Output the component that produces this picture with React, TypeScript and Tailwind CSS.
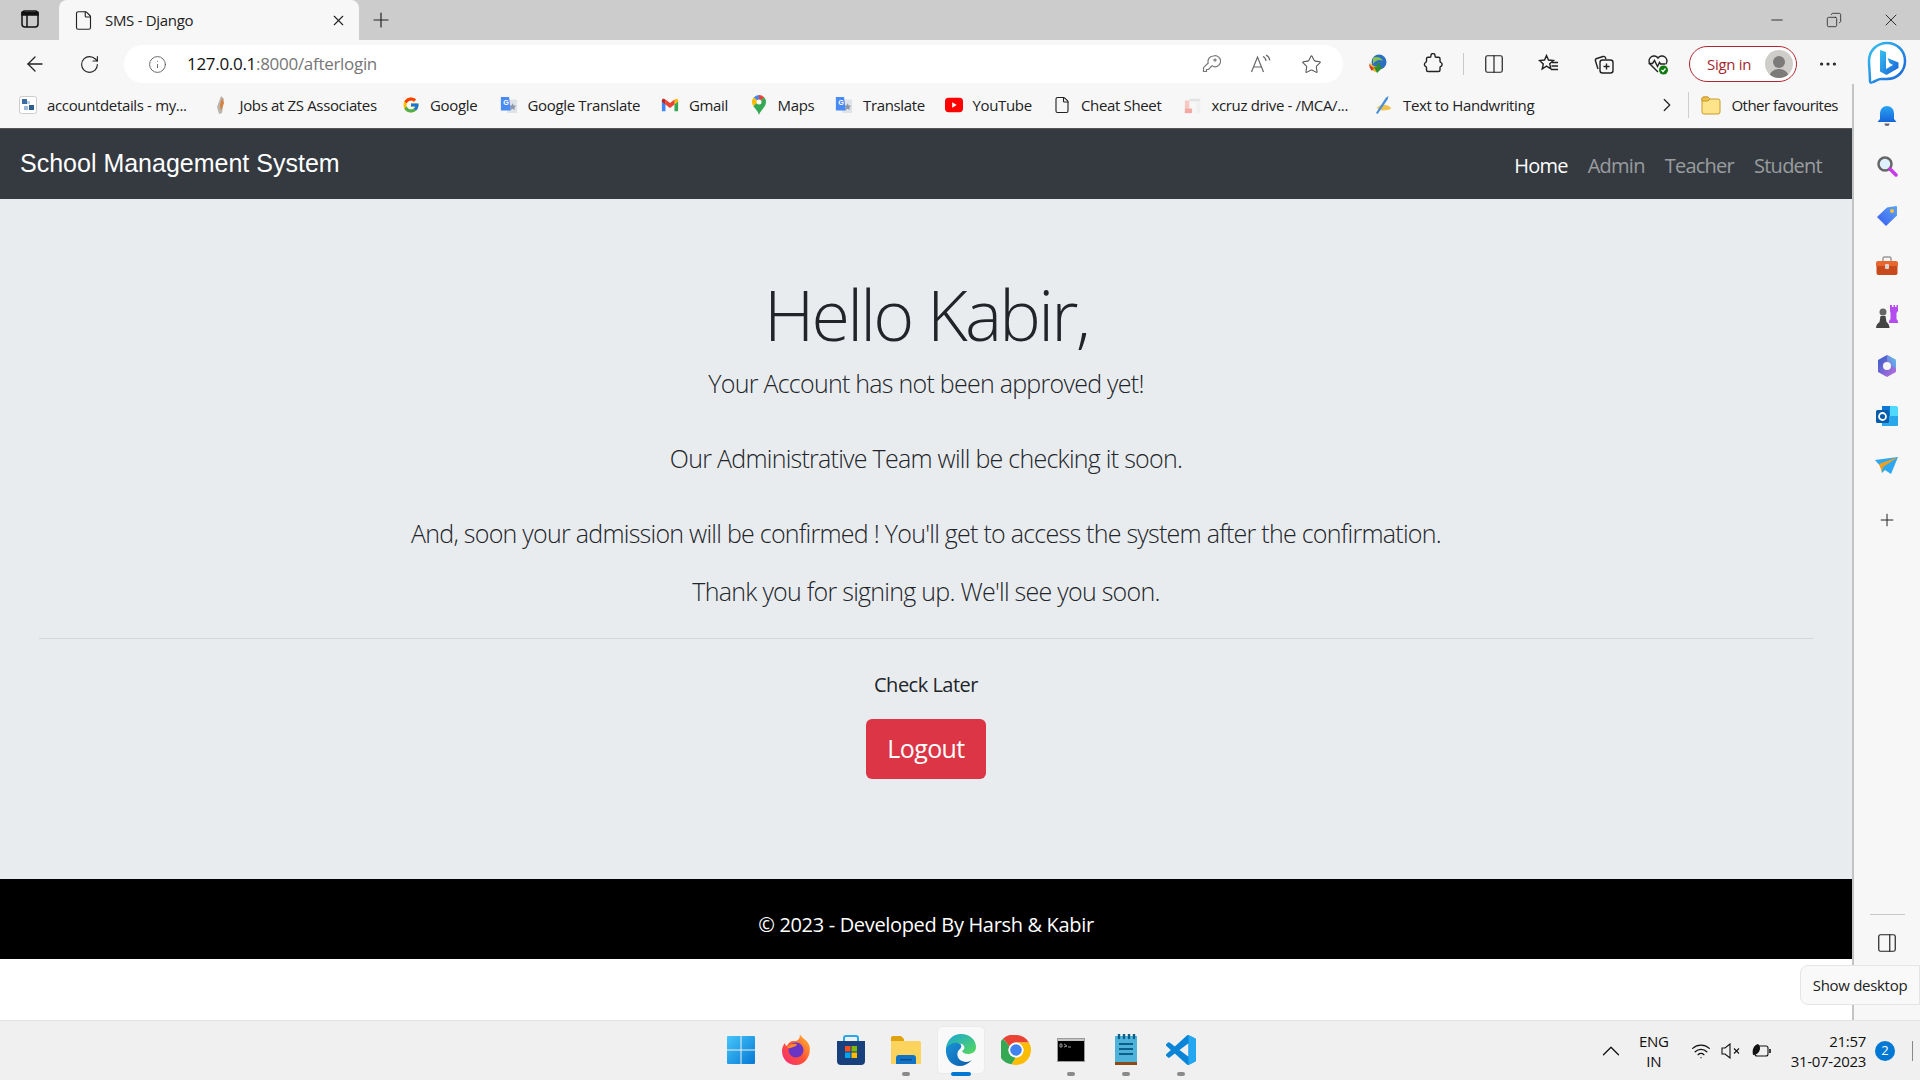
import {
  ArrowLeft,
  ChevronRight,
  ChevronUp,
  Columns2,
  Copy,
  File,
  Info,
  Minus,
  MoreHorizontal,
  PanelRight,
  Plus,
  RotateCw,
  Star,
  Wifi,
  X,
} from "lucide-react";
import { FcGoogle } from "react-icons/fc";
import type { ReactNode } from "react";

const ui = "font-['Open_Sans','Noto_Sans',sans-serif]";

function AccountIcon() {
  return (
    <svg width="18" height="18" viewBox="0 0 18 18">
      <rect x="0.5" y="0.5" width="17" height="17" rx="2" fill="#fff" stroke="#ccc" />
      <rect x="3" y="3" width="5" height="5" fill="#3b6ea5" />
      <rect x="8" y="5" width="3" height="3" fill="#b9cfe4" />
      <rect x="10" y="9" width="5" height="5" fill="#2b5d91" />
      <rect x="5" y="10" width="4" height="4" fill="#9dbad6" />
    </svg>
  );
}

function JobsIcon() {
  return (
    <svg width="18" height="20" viewBox="0 0 18 20">
      <path d="M9 1 L12 4 L10 18 L7 19 L5 12 Z" fill="#b9b5ae" />
      <path d="M10 3 L12 8 L9 16 L8 10 Z" fill="#d9803a" />
    </svg>
  );
}

function TranslateIcon() {
  return (
    <svg width="20" height="20" viewBox="0 0 20 20">
      <path d="M8 4h10a1 1 0 0 1 1 1v14H8z" fill="#dfe3e8" />
      <path d="M14 8l1.2 2.6 2.8.3-2 1.9.5 2.7-2.5-1.4-2.5 1.4.5-2.7-2-1.9 2.8-.3z" fill="#8b97a6" />
      <path d="M1 1h9l2 15H1z" fill="#4a8af4" />
      <text x="3.5" y="10.5" fontSize="8" fontWeight="700" fill="#fff" fontFamily="Liberation Sans, sans-serif">G</text>
    </svg>
  );
}

function GmailIcon() {
  return (
    <svg width="20" height="16" viewBox="0 0 20 16">
      <path d="M1 3v11a1 1 0 0 0 1 1h3V7z" fill="#4285f4" />
      <path d="M19 3v11a1 1 0 0 1-1 1h-3V7z" fill="#34a853" />
      <path d="M15 2v5.5l4-3V3c0-2-2-2.400-3-1.500z" fill="#fbbc04" />
      <path d="M5 7.500V2l5 3.800L15 2v5.500l-5 3.800z" fill="#ea4335" />
      <path d="M1 3c0-2 2-2.400 3-1.500L5 2v5.500l-4-3z" fill="#c5221f" />
    </svg>
  );
}

function MapsIcon() {
  return (
    <svg width="16" height="20" viewBox="0 0 16 20">
      <path d="M8 0a7 7 0 0 0-5.300 2.500L8 7z" fill="#4285f4" />
      <path d="M8 0v7l5.300-4.500A7 7 0 0 0 8 0z" fill="#ea4335" />
      <path d="M2.700 2.500A7 7 0 0 0 1 7c0 1.500.6 2.900 1.300 4L8 7z" fill="#fbbc04" />
      <path d="M13.300 2.500 2.300 11c1.700 2.600 4.700 5 5.700 9 1-4 6.900-8 7-13a7 7 0 0 0-1.700-4.500z" fill="#34a853" />
      <circle cx="8" cy="7" r="2.500" fill="#fff" />
    </svg>
  );
}

function YoutubeIcon() {
  return (
    <svg width="20" height="16" viewBox="0 0 20 16">
      <rect width="20" height="16" y="0" rx="4" fill="#f00" />
      <path d="M8 5l5 3-5 3z" fill="#fff" />
    </svg>
  );
}

function DriveIcon() {
  return (
    <svg width="20" height="20" viewBox="0 0 20 20">
      <path d="M1 5h5v14H1z" fill="#f7c9c4" />
      <path d="M6 3h12v3H6z" fill="#e3e3e3" />
      <path d="M14 6h4v13h-4z" fill="#f0f0f0" />
      <path d="M1 14h8v5H1z" fill="#f3a9a1" />
    </svg>
  );
}

function HandwritingIcon() {
  return (
    <svg width="20" height="22" viewBox="0 0 20 22">
      <path d="M2 14c3-3 7-4 10-3 3 .5 5 2 6 4-3 2-6 2-9 2-3 .3-5-1-7-3z" fill="#f2c24f" />
      <path d="M1 20 12 3l3-2-1 4L3 21z" fill="#4a90d9" />
    </svg>
  );
}

function FolderIcon() {
  return (
    <svg width="20" height="20" viewBox="0 0 20 20">
      <path d="M1 4a2 2 0 0 1 2-2h4l2 2h8a2 2 0 0 1 2 2v11a2 2 0 0 1-2 2H3a2 2 0 0 1-2-2z" fill="#fde48a" stroke="#c99a2e" />
      <path d="M1 5a2 2 0 0 1 2-3h4l2 2-2 2H1z" fill="#eec04b" stroke="#c99a2e" />
    </svg>
  );
}

const bookmarks: { label: string; icon: ReactNode; cls: string }[] = [
  { label: "accountdetails - my...", icon: <AccountIcon />, cls: "w-[142px]" },
  { label: "Jobs at ZS Associates", icon: <JobsIcon />, cls: "w-[140px]" },
  { label: "Google", icon: <FcGoogle size={18} />, cls: "w-[47px]" },
  { label: "Google Translate", icon: <TranslateIcon />, cls: "w-[111px]" },
  { label: "Gmail", icon: <GmailIcon />, cls: "w-[38px]" },
  { label: "Maps", icon: <MapsIcon />, cls: "w-[35px]" },
  { label: "Translate", icon: <TranslateIcon />, cls: "w-[59px]" },
  { label: "YouTube", icon: <YoutubeIcon />, cls: "w-[58px]" },
  { label: "Cheat Sheet", icon: <File size={22} strokeWidth={1.5} color="#222" />, cls: "w-[80px]" },
  { label: "xcruz drive - /MCA/...", icon: <DriveIcon />, cls: "w-[141px]" },
  { label: "Text to Handwriting", icon: <HandwritingIcon />, cls: "w-[130px]" },
];

function KeyIcon() {
  return (
    <svg width="20" height="20" viewBox="0 0 20 20" fill="none" stroke="#777" strokeWidth="1.2">
      <path d="M12.500 2a5.500 5.500 0 0 0-5.300 7L2.500 13.700V17.500H5.500V15.500H7.500L11 11.800A5.500 5.500 0 1 0 12.500 2z" />
      <circle cx="14" cy="6" r="1" />
    </svg>
  );
}

function ReadAloudIcon() {
  return (
    <svg width="22" height="20" viewBox="0 0 22 20" fill="none" stroke="#666" strokeWidth="1.2">
      <path d="M1.500 18 7.500 3l6 15M3.500 13h8" />
      <path d="M13 2.500c1.800.8 2.800 2.300 3 4.500M16 1c2.200 1 3.500 3 3.800 5.500" />
    </svg>
  );
}

function IdmIcon() {
  return (
    <svg width="20" height="20" viewBox="0 0 20 20">
      <circle cx="11" cy="8" r="7.500" fill="#2b6fc4" />
      <path d="M5 4c3-2 8-1 10 3-4-2-7-1-10 3z" fill="#8ac44a" />
      <path d="M2 9c0 4 2 8 6 9 2-1 3-3 4-5-4 0-7-1-10-4z" fill="#e2b31f" />
      <path d="M9 19l6-6h-3V9H9v4H6z" fill="#2f8c2f" />
      <path d="M1 9c1 3 3 4 5 5l-2 3C2 15 1 12 1 9z" fill="#d23a2a" />
    </svg>
  );
}

function PuzzleIcon() {
  return (
    <svg width="20" height="22" viewBox="0 0 20 22" fill="none" stroke="#222" strokeWidth="1.4">
      <path d="M8 2.500a2 2 0 0 1 4 0c0 1 .2 1.800 1 1.800h2.500a1.500 1.500 0 0 1 1.500 1.500v2.500c0 .8.800 1 1 1.200a2.200 2.200 0 0 1 0 3.800c-.5.300-1 .5-1 1.200v2.500a1.500 1.500 0 0 1-1.500 1.500H5a1.500 1.500 0 0 1-1.500-1.500V14.500c0-.7-.5-1-1-1.200a2.200 2.200 0 0 1 0-3.800c.5-.3 1-.5 1-1.200V5.800A1.500 1.500 0 0 1 5 4.300h2c.6 0 1-.8 1-1.800z" />
    </svg>
  );
}

function FavoritesIcon() {
  return (
    <svg width="22" height="22" viewBox="0 0 22 22" fill="none" stroke="#222" strokeWidth="1.4">
      <path d="M8.500 2.500l2 4.500 5 .5-3.800 3.300 1.100 5-4.300-2.600L4.200 16l1.100-5L1.500 7.500l5-.5z" />
      <path d="M14 9.500h6M13.500 13h6.500M13 16.500h7" />
    </svg>
  );
}

function CollectionsIcon() {
  return (
    <svg width="22" height="22" viewBox="0 0 22 22" fill="none" stroke="#222" strokeWidth="1.4">
      <path d="M5 16 2.500 8a2 2 0 0 1 1.300-2.500L10 3.500a2 2 0 0 1 2.500 1.200L13 6" />
      <rect x="7" y="7" width="13" height="13" rx="2.500" />
      <path d="M13.500 10.500v6M10.500 13.500h6" />
    </svg>
  );
}

function HealthIcon() {
  return (
    <svg width="22" height="22" viewBox="0 0 22 22" fill="none">
      <path d="M11 19 3 11a5 5 0 0 1 8-6 5 5 0 0 1 8 6" stroke="#222" strokeWidth="1.4" />
      <path d="M1.500 10.500h4l2-3 3 6 2-4 1 1.500h5" stroke="#222" strokeWidth="1.4" />
      <circle cx="16.500" cy="17" r="4.500" fill="#107c10" />
      <path d="M14.500 17l1.500 1.500 2.500-3" stroke="#fff" strokeWidth="1.2" />
    </svg>
  );
}

function BingIcon() {
  return (
    <svg width="40" height="46" viewBox="0 0 40 46">
      <defs>
        <linearGradient id="bingStroke" x1="0" y1="0" x2="1" y2="1">
          <stop offset="0" stopColor="#35c1f1" />
          <stop offset="1" stopColor="#1b5fd6" />
        </linearGradient>
      </defs>
      <path d="M20 2C9.500 2 2 10 2 20c0 6 1 13 1 20 0 2 1 2 3 1 3-1 5-3 8-3h6c10.500 0 18-8 18-18S30.500 2 20 2z" fill="#fff" stroke="url(#bingStroke)" strokeWidth="2.500" />
      <path d="M13 9l6 2v17l7-4-3.500-2-2-5 11 4.500v5.500l-12 7-6.500-3.500z" fill="url(#bingStroke)" />
    </svg>
  );
}

function BellIcon() {
  return (
    <svg width="20" height="22" viewBox="0 0 20 22">
      <defs>
        <linearGradient id="bell" x1="0" y1="0" x2="0" y2="1">
          <stop offset="0" stopColor="#2aa4f4" />
          <stop offset="1" stopColor="#1565d8" />
        </linearGradient>
      </defs>
      <path d="M10 1a7 7 0 0 0-7 7v6l-2.500 3h19L17 14V8a7 7 0 0 0-7-7z" fill="url(#bell)" />
      <path d="M7.500 18.500h5a2.500 2.500 0 0 1-5 0z" fill="#667" />
    </svg>
  );
}

function SearchColorIcon() {
  return (
    <svg width="22" height="22" viewBox="0 0 22 22">
      <circle cx="9" cy="9" r="6.500" fill="#dff1fb" stroke="#666" strokeWidth="2.500" />
      <path d="M14 14l6 6" stroke="#c73ae8" strokeWidth="3.500" strokeLinecap="round" />
    </svg>
  );
}

function TagIcon() {
  return (
    <svg width="22" height="22" viewBox="0 0 22 22">
      <defs>
        <linearGradient id="tag" x1="0" y1="1" x2="1" y2="0">
          <stop offset="0" stopColor="#3b5bf0" />
          <stop offset="1" stopColor="#5aa5f5" />
        </linearGradient>
      </defs>
      <path d="M11 2.500 20 1a1 1 0 0 1 1 1v8.500L10 21 1 12z" fill="url(#tag)" />
      <circle cx="16" cy="6" r="2" fill="#fbc02d" />
    </svg>
  );
}

function ToolboxIcon() {
  return (
    <svg width="24" height="20" viewBox="0 0 24 20">
      <path d="M8 5V2.500A1.500 1.500 0 0 1 9.500 1h5A1.500 1.500 0 0 1 16 2.500V5" fill="none" stroke="#9a9a9a" strokeWidth="1.500" />
      <path d="M1 7a2 2 0 0 1 2-2h18a2 2 0 0 1 2 2v3H1z" fill="#e9662c" />
      <path d="M1.500 10h21v7.500A2 2 0 0 1 20.500 19h-17a2 2 0 0 1-2-2z" fill="#c8491b" />
      <rect x="10" y="8" width="4" height="5" rx="1" fill="#d9d4cf" />
    </svg>
  );
}

function ChessIcon() {
  return (
    <svg width="24" height="24" viewBox="0 0 24 24">
      <path d="M15 1h2v2h1.500V1h1.500v2h1.500V1H23v6l-1.500 2v6l1.500 2v2H14v-2l1.500-2V9L15 7z" fill="#b44cf0" />
      <circle cx="8" cy="8" r="3.500" fill="#666" />
      <path d="M5.500 12h5l1 6h-7zM1 24c0-3 2-5 3.500-6h7c1.500 1 3 3 3 6z" fill="#444" />
    </svg>
  );
}

function OfficeIcon() {
  return (
    <svg width="22" height="24" viewBox="0 0 22 24">
      <defs>
        <linearGradient id="off1" x1="0" y1="0" x2="1" y2="1">
          <stop offset="0" stopColor="#2f5fc8" />
          <stop offset="1" stopColor="#c06fe0" />
        </linearGradient>
        <linearGradient id="off2" x1="0" y1="1" x2="1" y2="0">
          <stop offset="0" stopColor="#8f60d8" />
          <stop offset="1" stopColor="#4fd2f2" />
        </linearGradient>
      </defs>
      <path d="M11 1l9 5v12l-9 5-9-5V6z" fill="url(#off1)" />
      <path d="M11 1l9 5v9l-5-3c0-2-1-4-4-4z" fill="url(#off2)" />
      <circle cx="11" cy="12" r="4" fill="#f7f7f7" />
    </svg>
  );
}

function OutlookIcon() {
  return (
    <svg width="22" height="22" viewBox="0 0 22 22">
      <rect x="6" y="1" width="14" height="12" fill="#0f78d4" />
      <path d="M6 11h16v9a1 1 0 0 1-1 1H6z" fill="#28a8ea" />
      <path d="M14 1h6a2 2 0 0 1 2 2v8h-8z" fill="#50d9ff" />
      <rect x="0" y="5" width="13" height="13" rx="1.500" fill="#0a5cab" />
      <circle cx="6.500" cy="11.500" r="3.500" fill="none" stroke="#fff" strokeWidth="1.800" />
    </svg>
  );
}

function SendIcon() {
  return (
    <svg width="24" height="18" viewBox="0 0 24 18">
      <path d="M0 3 23 0 16 17l-6-4-3 3-1-6z" fill="#2da7f0" />
      <path d="M4 7 23 0 8 10l-1 5z" fill="#f0a020" />
    </svg>
  );
}

function WinIcon() {
  return (
    <svg width="30" height="30" viewBox="0 0 30 30">
      <defs>
        <linearGradient id="win" x1="0" y1="0" x2="1" y2="1">
          <stop offset="0" stopColor="#46c6fa" />
          <stop offset="1" stopColor="#0678d4" />
        </linearGradient>
      </defs>
      <path d="M1 2a1 1 0 0 1 1-1h12.500v13.500H1zM15.500 1H28a1 1 0 0 1 1 1v12.500H15.500zM1 15.500h13.500V29H2a1 1 0 0 1-1-1zM15.500 15.500H29V28a1 1 0 0 1-1 1H15.500z" fill="url(#win)" />
    </svg>
  );
}

function FirefoxIcon() {
  return (
    <svg width="30" height="32" viewBox="0 0 30 32">
      <defs>
        <linearGradient id="ff" x1="1" y1="0" x2="0" y2="1">
          <stop offset="0" stopColor="#ffc22e" />
          <stop offset="0.5" stopColor="#ff5634" />
          <stop offset="1" stopColor="#f4267a" />
        </linearGradient>
      </defs>
      <path d="M19 0c1 4 8 6 9.500 12 2 9-4 19-13.500 19C6 31 1 24 1 17c0-3 1-6 3-8 0 2 1 3 2 3 1-3 4-5 6-5 3 0 7 0 7-7z" fill="url(#ff)" />
      <circle cx="15" cy="16" r="7.500" fill="#6a35c4" />
      <path d="M6 13c3-3 7-4 9-3 3 .5-2 3-3 3-2 1-4 2-6 0z" fill="#ff8a2e" />
    </svg>
  );
}

function StoreIcon() {
  return (
    <svg width="30" height="30" viewBox="0 0 30 30">
      <path d="M8 6V3a2 2 0 0 1 2-2h10a2 2 0 0 1 2 2v3" fill="none" stroke="#28a8ea" strokeWidth="2" />
      <path d="M1 6h28v20a4 4 0 0 1-4 4H5a4 4 0 0 1-4-4z" fill="#17407c" />
      <rect x="9" y="11" width="5.500" height="5.500" fill="#f25022" />
      <rect x="15.500" y="11" width="5.500" height="5.500" fill="#7fba00" />
      <rect x="9" y="17.500" width="5.500" height="5.500" fill="#00a4ef" />
      <rect x="15.500" y="17.500" width="5.500" height="5.500" fill="#ffb900" />
    </svg>
  );
}

function ExplorerIcon() {
  return (
    <svg width="30" height="28" viewBox="0 0 30 28">
      <path d="M0 2a2 2 0 0 1 2-2h8l3 3v5H0z" fill="#e0a30f" />
      <path d="M0 5h28a2 2 0 0 1 2 2v21H0z" fill="#fcd35c" />
      <path d="M5 22a3 3 0 0 1 3-3h14a3 3 0 0 1 3 3v6H5z" fill="#1173c6" />
      <rect x="9" y="23" width="12" height="1.500" fill="#0b4f8f" />
    </svg>
  );
}

function EdgeIcon() {
  return (
    <svg width="32" height="32" viewBox="0 0 32 32">
      <defs>
        <linearGradient id="edgeA" x1="0" y1="0" x2="1" y2="1">
          <stop offset="0" stopColor="#1aa6d8" />
          <stop offset="1" stopColor="#58d858" />
        </linearGradient>
        <linearGradient id="edgeB" x1="0" y1="0" x2="1" y2="1">
          <stop offset="0" stopColor="#1b93d8" />
          <stop offset="1" stopColor="#0b5cab" />
        </linearGradient>
      </defs>
      <path d="M1 14C2 6 8 0 16 0c9 0 15 6 15 13 0 5-4 7-8 7-3 0-5-1-6-3 2-1 3-3 2-5-2-3-7-3-11-1-3 1-6 3-7 3z" fill="url(#edgeA)" />
      <path d="M1 14c3-4 8-6 12-5 4 1 4 4 2 6-3 2-4 7 0 11 3 2 8 3 12 0-4 4-8 6-12 6C6 32 0 24 1 14z" fill="url(#edgeB)" />
    </svg>
  );
}

function ChromeIcon() {
  return (
    <svg width="30" height="30" viewBox="0 0 30 30">
      <path d="M15 0a15 15 0 0 1 13 7.500H15a7.500 7.500 0 0 0-6.500 3.750L2 3.700A15 15 0 0 1 15 0z" fill="#ea4335" />
      <path d="M2 3.700l6.500 7.550A7.500 7.500 0 0 0 15 22.500L10.500 29.300A15 15 0 0 1 2 3.700z" fill="#34a853" />
      <path d="M28 7.500A15 15 0 0 1 10.500 29.300L15 22.500A7.500 7.500 0 0 0 21.500 11.250L15 7.500z" fill="#fbbc04" />
      <circle cx="15" cy="15" r="7.500" fill="#fff" />
      <circle cx="15" cy="15" r="5.800" fill="#3f82f0" />
    </svg>
  );
}

function CmdIcon() {
  return (
    <svg width="28" height="24" viewBox="0 0 28 24">
      <rect x="0.500" y="0.500" width="27" height="23" fill="#000" stroke="#9b9b9b" />
      <rect x="1" y="1" width="26" height="2" fill="#c4c4c4" />
      <path d="M3 6h2v3H3zM7 6l3 2-3 1M11 9h3" stroke="#bbb" strokeWidth="0.800" fill="none" />
    </svg>
  );
}

function NotepadIcon() {
  return (
    <svg width="24" height="32" viewBox="0 0 24 32">
      <rect x="1" y="2" width="22" height="28" fill="#4fb3d9" />
      <rect x="1" y="28" width="22" height="3" fill="#8a4a1a" />
      <path d="M5 0v4M10 0v4M15 0v4M20 0v4" stroke="#0b5f8a" strokeWidth="2.400" strokeLinecap="round" />
      <path d="M5 10h14M5 15h14M5 20h14" stroke="#0b5f8a" strokeWidth="2" />
    </svg>
  );
}

function VscodeIcon() {
  return (
    <svg width="30" height="30" viewBox="0 0 24 24">
      <path
        d="M23.150 2.587 18.210.21a1.494 1.494 0 0 0-1.705.29l-9.460 8.630-4.120-3.128a.999.999 0 0 0-1.276.057L.327 7.261A1 1 0 0 0 .326 8.740L3.899 12 .326 15.260a1 1 0 0 0 .001 1.479L1.650 17.940a.999.999 0 0 0 1.276.057l4.120-3.128 9.460 8.630a1.492 1.492 0 0 0 1.704.29l4.942-2.377A1.500 1.500 0 0 0 24 20.060V3.939a1.500 1.500 0 0 0-.850-1.352zm-5.146 14.861L10.826 12l7.178-5.448v10.896z"
        fill="#0a84d6"
      />
      <path d="M18 0.100 23.150 2.587A1.500 1.500 0 0 1 24 3.939V20.060a1.500 1.500 0 0 1-.850 1.352L18 23.900V17.448V6.552z" fill="#22a7f0" />
    </svg>
  );
}

function MuteIcon() {
  return (
    <svg width="19" height="16" viewBox="0 0 19 16" fill="none" stroke="#111" strokeWidth="1.100">
      <path d="M1 5h3l5-4v14l-5-4H1z" />
      <path d="M13 5.500l5 5M18 5.500l-5 5" />
    </svg>
  );
}

function BatteryIcon() {
  return (
    <svg width="20" height="16" viewBox="0 0 20 16" fill="none" stroke="#111" strokeWidth="1.100">
      <rect x="4" y="3" width="13" height="10" rx="2" />
      <path d="M19 6v4" strokeWidth="1.600" />
      <path d="M7 1c-5 2-6 6-5 11 4 0 7-3 7-7 0-2-1-3-2-4z" fill="#111" stroke="none" />
    </svg>
  );
}

const sideIcons = [
  <BellIcon key="bell" />,
  <SearchColorIcon key="search" />,
  <TagIcon key="tag" />,
  <ToolboxIcon key="tools" />,
  <ChessIcon key="chess" />,
  <OfficeIcon key="office" />,
  <OutlookIcon key="outlook" />,
  <SendIcon key="send" />,
];

const taskbarIcons = [
  { icon: <WinIcon />, key: "win", dot: false },
  { icon: <FirefoxIcon />, key: "firefox", dot: false },
  { icon: <StoreIcon />, key: "store", dot: false },
  { icon: <ExplorerIcon />, key: "explorer", dot: true },
  { icon: <EdgeIcon />, key: "edge", dot: false, active: true },
  { icon: <ChromeIcon />, key: "chrome", dot: false },
  { icon: <CmdIcon />, key: "cmd", dot: true },
  { icon: <NotepadIcon />, key: "notepad", dot: true },
  { icon: <VscodeIcon />, key: "vscode", dot: true },
];

export default function App() {
  return (
    <div className={`relative flex h-[1080px] w-[1920px] flex-col overflow-hidden bg-white ${ui}`}>
      {/* Tab strip */}
      <div className="flex h-10 items-end bg-[#cccccc]">
        <div className="flex h-10 w-[59px] items-center justify-center pb-0.5">
          <svg width="20" height="20" viewBox="0 0 20 20" fill="none" stroke="#111" strokeWidth="1.500">
            <rect x="2" y="2" width="16" height="16" rx="3" />
            <path d="M2 3.500h16V6H2z" fill="#111" />
            <path d="M7 6v12" />
          </svg>
        </div>
        <div className="flex h-10 w-[300px] items-center rounded-t-lg bg-[#f7f7f7] pl-[14px] pr-[12px]">
          <File size={21} strokeWidth={1.3} color="#222" />
          <span className="ml-[11px] flex-1 text-[15px] tracking-[-0.3px] text-[#222]">SMS - Django</span>
          <X size={17} strokeWidth={1.6} color="#222" />
        </div>
        <div className="flex h-10 w-[44px] items-center justify-center">
          <Plus size={24} strokeWidth={1.2} color="#222" />
        </div>
        <div className="flex h-10 flex-1 items-center justify-end pr-[19px] text-[#222]">
          <Minus size={18} strokeWidth={1.2} />
          <Copy size={16} strokeWidth={1.2} className="ml-[40px] -scale-x-100" />
          <X size={20} strokeWidth={1.1} className="ml-[39px]" />
        </div>
      </div>

      {/* Address row */}
      <div className="flex h-11 items-center bg-[#f7f7f7] pt-[4px]">
        <div className="flex w-[124px] items-center gap-[32px] pl-[23px]">
          <ArrowLeft size={24} strokeWidth={1.3} color="#222" />
          <RotateCw size={21} strokeWidth={1.3} color="#222" />
        </div>
        <div className="flex h-[38px] w-[1219px] items-center rounded-full bg-white pl-[24px] pr-[21px]">
          <Info size={19} strokeWidth={1.1} color="#555" />
          <span className="ml-[20px] flex-1 text-[17px] tracking-[-0.3px] text-[#767676]">
            <span className="text-[#111]">127.0.0.1</span>:8000/afterlogin
          </span>
          <div className="flex items-center gap-[29px]">
            <KeyIcon />
            <ReadAloudIcon />
            <Star size={21} strokeWidth={1.2} color="#555" />
          </div>
        </div>
        <div className="ml-[25px] flex items-center">
          <IdmIcon />
          <div className="ml-[35px]">
            <PuzzleIcon />
          </div>
          <div className="ml-[20px] h-[22px] w-px bg-[#c8c8c8]" />
          <div className="ml-[19px]">
            <Columns2 size={22} strokeWidth={1.3} color="#222" />
          </div>
          <div className="ml-[33px]">
            <FavoritesIcon />
          </div>
          <div className="ml-[33px]">
            <CollectionsIcon />
          </div>
          <div className="ml-[32px]">
            <HealthIcon />
          </div>
          <div className="ml-[20px] flex h-[36px] w-[108px] items-center justify-between rounded-full border-[1.500px] border-[#b3262e] bg-white pl-[17px] pr-[3px]">
            <span className="text-[15px] tracking-[-0.3px] text-[#a4262c]">Sign in</span>
            <div className="flex h-7 w-7 flex-col items-center justify-end overflow-hidden rounded-full bg-[#cfcdca]">
              <div className="mb-px h-3 w-3 rounded-full bg-[#7d7b79]" />
              <div className="h-[9px] w-[20px] rounded-t-full bg-[#7d7b79]" />
            </div>
          </div>
          <div className="ml-[20px]">
            <MoreHorizontal size={22} strokeWidth={1.5} color="#222" />
          </div>
          <div className="ml-[28px]">
            <BingIcon />
          </div>
        </div>
      </div>

      {/* Everything under the toolbar */}
      <div className="flex flex-1">
        <div className="flex w-[1852px] flex-col">
          <div className="flex h-[45px] items-center border-b border-[#555] bg-[#f7f7f7] pb-[2px] pl-[19px] pr-[14px]">
            <div className="flex items-center gap-[22.500px]">
              {bookmarks.map((b) => (
                <div key={b.label} className="flex items-center">
                  <div className="flex w-[18px] items-center justify-center">{b.icon}</div>
                  <span className={`ml-[10px] whitespace-nowrap text-[15px] tracking-[-0.35px] text-[#222] ${b.cls}`}>
                    {b.label}
                  </span>
                </div>
              ))}
            </div>
            <div className="ml-auto flex items-center">
              <ChevronRight size={22} strokeWidth={1.3} color="#222" />
              <div className="ml-[10px] h-[26px] w-px bg-[#d0d0d0]" />
              <div className="ml-[12px]">
                <FolderIcon />
              </div>
              <span className="ml-[10px] text-[15px] tracking-[-0.5px] text-[#222]">Other favourites</span>
            </div>
          </div>

          {/* Bootstrap page */}
          <div className="flex h-[70px] items-center justify-between bg-[#343a40] pl-[20px] pr-[30px]">
            <span className="font-['Liberation_Sans',sans-serif] text-[25px] text-white">School Management System</span>
            <nav className="flex gap-[20px] pt-[3px] text-[20px] tracking-[-0.75px] text-white/50">
              <span className="text-white">Home</span>
              <span>Admin</span>
              <span>Teacher</span>
              <span>Student</span>
            </nav>
          </div>

          <main className="flex h-[680px] flex-col items-center bg-[#e9ecef] px-[39px] pt-[73px] text-center text-[#212529]">
            <h1 className="text-[70px] leading-[84px] font-light tracking-[-2.750px]">Hello Kabir,</h1>
            <p className="mt-[9px] text-[25px] leading-[37.500px] font-light tracking-[-0.740px]">
              Your Account has not been approved yet!
            </p>
            <p className="mt-[37.500px] text-[25px] leading-[37.500px] font-light tracking-[-0.740px]">
              Our Administrative Team will be checking it soon.
            </p>
            <p className="mt-[37.500px] text-[25px] leading-[37.500px] font-light tracking-[-0.740px]">
              And, soon your admission will be confirmed ! You'll get to access the system after the confirmation.
            </p>
            <p className="mt-[20px] text-[25px] leading-[37.500px] font-light tracking-[-0.740px]">
              Thank you for signing up. We'll see you soon.
            </p>
            <hr className="mt-[28px] w-full border-t border-[#d3d6d9]" />
            <p className="mt-[31px] text-[20px] leading-[30px] tracking-[-0.5px]">Check Later</p>
            <button className="mt-[19px] h-[60px] w-[120px] rounded-[6px] bg-[#dc3545] text-[25px] tracking-[-0.6px] text-white">
              Logout
            </button>
          </main>

          <footer className="flex h-[80px] items-center justify-center bg-black pt-[12px] text-[20px] tracking-[-0.330px] text-white">
            © 2023 - Developed By Harsh &amp; Kabir
          </footer>
          <div className="flex-1 bg-white" />
        </div>

        {/* Edge sidebar */}
        <aside className="flex w-[68px] flex-col items-center border-l-2 border-[#c4c4c4] bg-[#f7f7f7] pt-[7px]">
          {sideIcons.map((icon, i) => (
            <div key={i} className="flex h-[50px] w-full items-center justify-center">
              {icon}
            </div>
          ))}
          <div className="mt-[4px] flex h-[50px] items-center justify-center">
            <Plus size={20} strokeWidth={1.2} color="#222" />
          </div>
          <div className="mt-auto mb-[105px] h-px w-[35px] bg-[#c8c8c8]" />
        </aside>
      </div>

      {/* Taskbar */}
      <div className="grid h-[60px] grid-cols-[1fr_auto_1fr] items-center border-t border-[#e4e4e4] bg-[#f0f0f0]">
        <div />
        <div className="ml-[2px] flex pb-[1px]">
          {taskbarIcons.map((t) => (
            <div key={t.key} className="relative flex h-[48px] w-[55px] items-center justify-center">
              {t.active && (
                <div className="absolute left-[3px] h-[48px] w-[48px] rounded-[5px] border border-[#ebebeb] bg-[#f9f9f9]" />
              )}
              <div className="relative flex items-center justify-center">{t.icon}</div>
              {t.dot && <div className="absolute bottom-[-2px] h-[4px] w-[8px] rounded-full bg-[#8a8a8a]" />}
              {t.active && <div className="absolute bottom-[-2px] h-[4px] w-[20px] rounded-full bg-[#0078d4]" />}
            </div>
          ))}
        </div>
        <div className="flex items-center justify-end text-[#111]">
          <ChevronUp size={30} strokeWidth={1} />
          <div className="ml-[6px] flex w-[44px] flex-col items-center text-[15px] leading-[20px] tracking-[-0.3px]">
            <span>ENG</span>
            <span>IN</span>
          </div>
          <div className="ml-[15px]">
            <Wifi size={20} strokeWidth={1.5} />
          </div>
          <div className="ml-[10px]">
            <MuteIcon />
          </div>
          <div className="ml-[11px]">
            <BatteryIcon />
          </div>
          <div className="ml-[20px] flex flex-col items-end text-[15px] leading-[20px] tracking-[-0.3px]">
            <span>21:57</span>
            <span>31-07-2023</span>
          </div>
          <div className="ml-[9px] flex h-5 w-5 items-center justify-center rounded-full bg-[#0078d4] text-[13px] text-white">
            2
          </div>
          <div className="mr-[7px] ml-[17px] h-[20px] w-px bg-[#888]" />
        </div>
      </div>

      {/* Overlays */}
      <div className="absolute top-[965px] right-0 flex h-10 w-[120px] items-center justify-center rounded-l-lg border border-[#e5e5e5] bg-[#f9f9f9] text-[15px] tracking-[-0.3px] text-[#222]">
        Show desktop
      </div>
      <div className="absolute top-[932px] right-[22px] bg-transparent">
        <PanelRight size={22} strokeWidth={1.3} color="#222" />
      </div>
    </div>
  );
}
